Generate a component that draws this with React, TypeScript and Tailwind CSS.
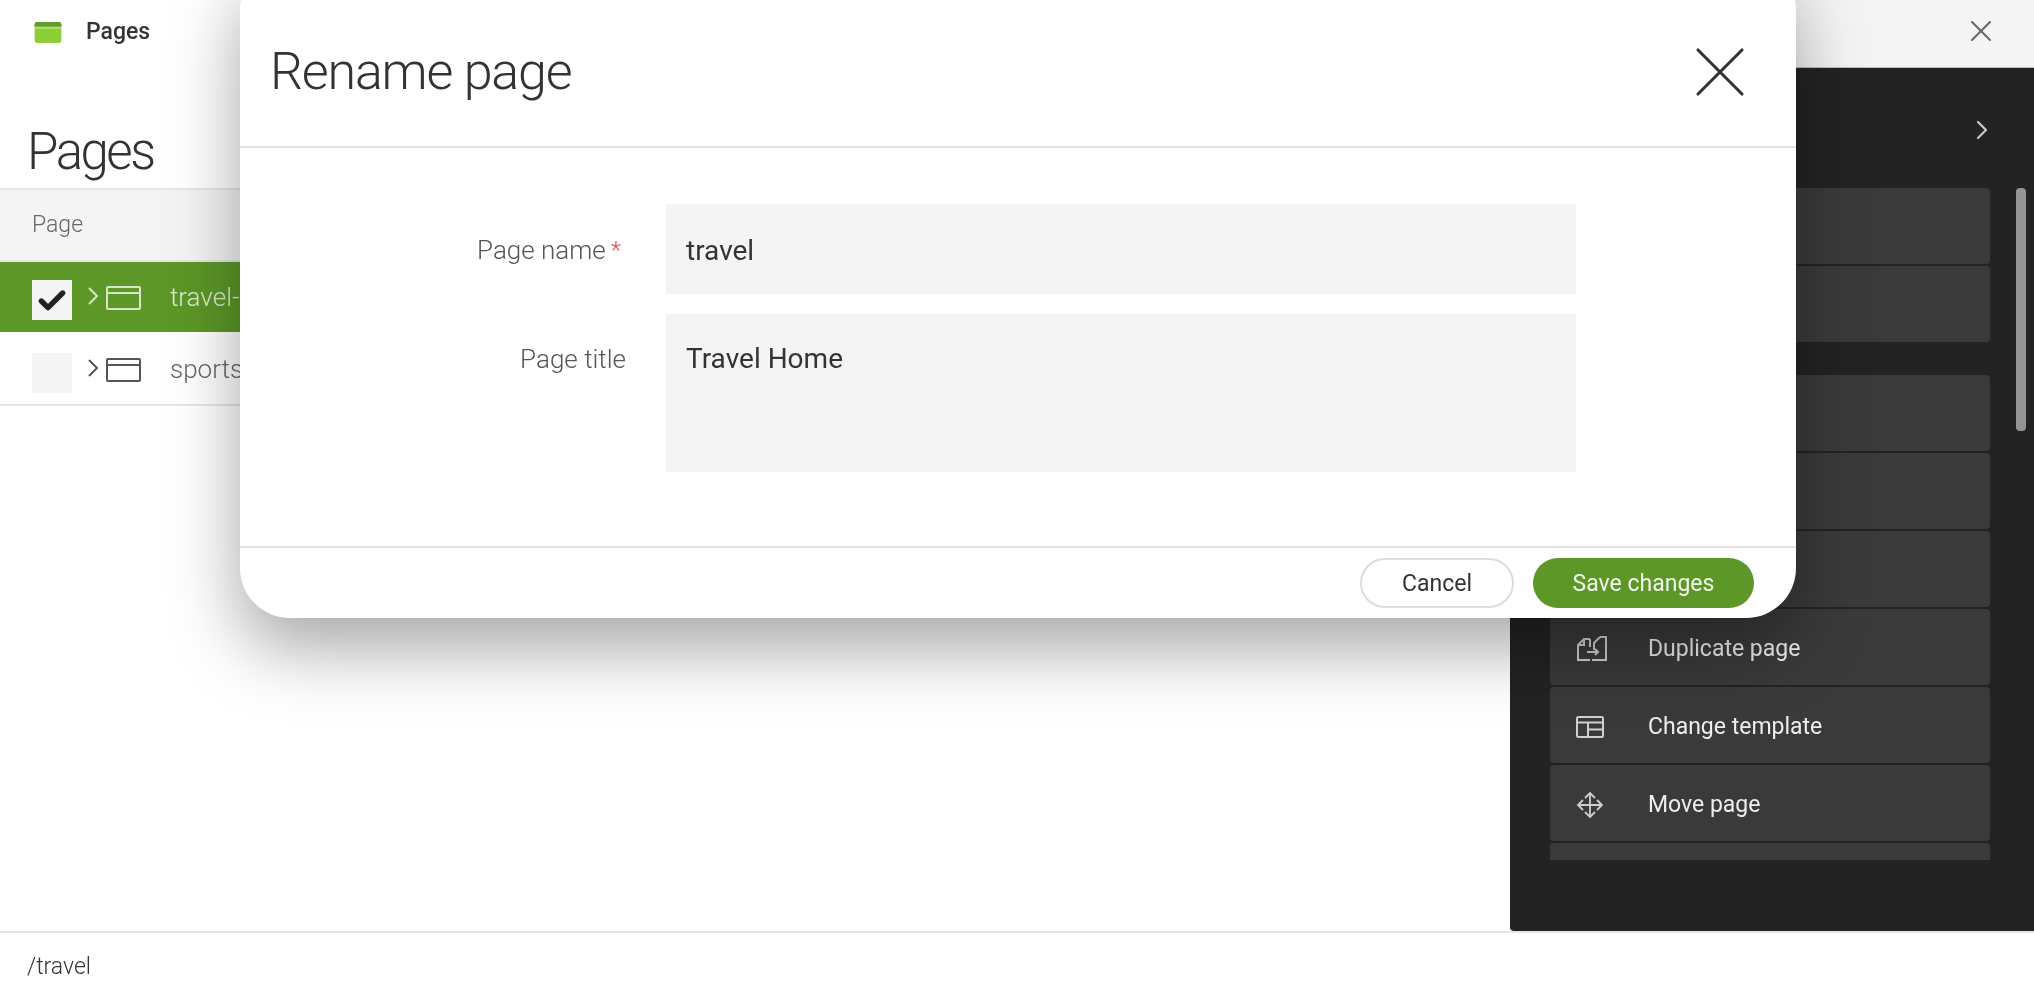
import React from "react";
import { X, ChevronRight, Check } from "lucide-react";

function PageIcon({ className }: { className: string }) {
  return (
    <svg viewBox="0 0 35 24" className={className} fill="none" stroke="currentColor" strokeWidth="2">
      <rect x="1" y="1" width="33" height="22" rx="1" />
      <path d="M1 7h33" />
    </svg>
  );
}

function RowChevron({ className }: { className: string }) {
  return (
    <svg viewBox="0 0 12 18" className={className} fill="none" stroke="currentColor" strokeWidth="2">
      <path d="M2 1l8 8-8 8" />
    </svg>
  );
}

function DuplicateIcon() {
  return (
    <svg viewBox="0 0 32 26" className="w-8 h-[26px]" fill="none" stroke="currentColor" strokeWidth="2">
      <path d="M14 3H8L2 9v15h12" />
      <path d="M8 3v6H2" />
      <path d="M14 3v8" />
      <path d="M24 1h6v23H16" />
      <path d="M24 1l-6 6v7" />
      <path d="M11 16h11M19 13l3 3-3 3" />
    </svg>
  );
}

function TemplateIcon() {
  return (
    <svg viewBox="0 0 28 22" className="w-7 h-[22px]" fill="none" stroke="currentColor" strokeWidth="2">
      <rect x="1" y="1" width="26" height="20" rx="1.5" />
      <path d="M1 6.5h26M12 6.5V21M12 13.5h15" />
    </svg>
  );
}

function MoveIcon() {
  return (
    <svg viewBox="0 0 28 28" className="w-7 h-7" fill="none" stroke="currentColor" strokeWidth="1.8">
      <path d="M14 2v24M2 14h24" />
      <path d="M9 7l5-5 5 5M9 21l5 5 5-5M7 9l-5 5 5 5M21 9l5 5-5 5" />
    </svg>
  );
}

function Action({ icon, label }: { icon?: React.ReactNode; label?: string }) {
  return (
    <div className="h-[76px] shrink-0 rounded bg-[#3a3a3a] pt-[4px] flex items-center text-[#eeeeee]">
      <div className="w-[98px] pl-[26px] flex items-center text-[#cfcfcf]">{icon}</div>
      <span className="text-[23px] font-normal">{label}</span>
    </div>
  );
}

export default function App() {
  return (
    <div className="relative w-full h-[996px] overflow-hidden bg-white flex flex-col font-['Roboto',sans-serif] blur-[0.7px]">
      {/* Top bar */}
      <header className="h-[68px] shrink-0 flex">
        <div className="flex-1 bg-white flex items-start pl-[34px] pt-[22px] gap-[24px]">
          <svg viewBox="0 0 28 22" className="w-7 h-[21px]">
            <rect width="28" height="22" rx="2.5" fill="#8ccf37" />
            <path d="M0 5V2.5A2.5 2.5 0 0 1 2.5 0h23A2.5 2.5 0 0 1 28 2.5V5z" fill="#5f9e2a" />
            <rect y="5" width="28" height="2" fill="#b4de7e" />
          </svg>
          <span className="text-[23px] font-medium text-[#333] leading-[18px] translate-y-[1px]">Pages</span>
        </div>
        <div className="w-[524px] shrink-0 bg-[#f4f4f4] border-b border-[#bbbbbb] flex justify-end">
          <X className="mr-[35px] mt-[13px] w-[36px] h-[36px] text-[#666]" strokeWidth={1.3} />
        </div>
      </header>

      {/* Body */}
      <div className="h-[863px] shrink-0 flex">
        <main className="flex-1 flex flex-col">
          <h1 className="h-[120px] pl-[27px] pt-[54px] text-[51px] leading-[60px] font-light text-[#333] tracking-[-2.5px]">Pages</h1>
          <div className="h-[74px] bg-[#f4f4f4] border-y-2 border-[#e6e6e6] pl-[32px] flex items-center text-[23px] font-light text-[#666]">
            Page
          </div>
          <div className="h-[70px] bg-[#5c9727] pl-[32px] pt-[6px] flex items-center text-[#d6e6c6]">
            <span className="w-10 h-[40px] bg-[#f4f4f4] flex items-center justify-center text-[#222]">
              <Check className="w-8 h-8 translate-y-[1px]" strokeWidth={4} />
            </span>
            <RowChevron className="ml-[15px] w-[12px] h-[18px] -translate-y-[4px]" />
            <PageIcon className="ml-[7px] w-[35px] h-[24px] -translate-y-[2px]" />
            <span className="ml-[29px] text-[26px] font-light -translate-y-[3px] text-[#dcebd0]">travel-home</span>
          </div>
          <div className="h-[74px] border-b-2 border-[#e6e6e6] pl-[32px] pt-[9px] flex items-center text-[#555]">
            <span className="w-10 h-[40px] bg-[#f4f4f4]" />
            <RowChevron className="ml-[15px] w-[12px] h-[18px] -translate-y-[5px]" />
            <PageIcon className="ml-[7px] w-[35px] h-[24px] -translate-y-[3px]" />
            <span className="ml-[29px] text-[26px] font-light -translate-y-[3px] text-[#666]">sports-home</span>
          </div>
        </main>

        <aside className="w-[524px] shrink-0 bg-[#232323] rounded-bl flex flex-col">
          <div className="h-[120px] shrink-0 flex items-start justify-end pr-[36px] pt-[46px]">
            <ChevronRight className="w-8 h-8 text-[#cccccc]" strokeWidth={1.6} />
          </div>
          <div className="flex h-[672px] pl-[40px] pr-[8px] gap-[26px]">
            <div className="flex-1 overflow-hidden flex flex-col gap-[2px]">
              <Action />
              <Action />
              <div className="h-[29px] shrink-0" />
              <Action />
              <Action />
              <Action />
              <Action icon={<DuplicateIcon />} label="Duplicate page" />
              <Action icon={<TemplateIcon />} label="Change template" />
              <Action icon={<MoveIcon />} label="Move page" />
              <Action />
            </div>
            <div className="w-[10px] h-[243px] rounded bg-[#959595]" />
          </div>
        </aside>
      </div>

      {/* Footer */}
      <footer className="flex-1 border-t-2 border-[#e6e6e6] pl-[27px] pt-[21px] text-[23px] font-light text-[#333] leading-[26px]">
        /travel
      </footer>

      {/* Modal */}
      <div className="absolute left-[240px] top-[-40px] w-[1556px] h-[658px] bg-white rounded-[50px] flex flex-col shadow-[0_30px_70px_rgba(0,0,0,0.35)]">
        <div className="h-[188px] shrink-0 border-b-2 border-[#e2e2e2] relative flex items-end pl-[30px] pb-[48px]">
          <h2 className="text-[52px] leading-[60px] font-light text-[#333] -mb-[4px] tracking-[-1.2px]">Rename page</h2>
          <X className="absolute right-[32px] top-[68px] w-[88px] h-[88px] text-[#333]" strokeWidth={0.85} />
        </div>
        <div className="flex-1 pt-[56px] flex flex-col gap-[20px]">
          <div className="flex">
            <label className="w-[381px] h-[90px] mr-[45px] pt-[30px] flex justify-end items-start text-[26px] leading-[32px] font-light text-[#555]">
              Page name<span className="text-[#e8474c] ml-[5px] text-[24px]">*</span>
            </label>
            <input
              readOnly
              value="travel"
              className="w-[910px] h-[90px] bg-[#f4f4f4] px-[20px] pt-[3px] text-[28px] text-[#333] outline-none"
            />
          </div>
          <div className="flex">
            <label className="w-[386px] mr-[40px] pt-[29px] text-right text-[26px] leading-[32px] font-light text-[#555]">
              Page title
            </label>
            <textarea
              readOnly
              value="Travel Home"
              className="block w-[910px] h-[158px] resize-none bg-[#f4f4f4] px-[20px] py-[29px] text-[28px] leading-[32px] text-[#333] outline-none"
            />
          </div>
        </div>
        <div className="h-[72px] shrink-0 border-t-2 border-[#e2e2e2] flex items-center justify-end gap-[19px] pr-[42px]">
          <button className="w-[154px] h-[50px] rounded-full border-2 border-[#dddddd] bg-white pt-[3px] text-[23px] text-[#333]">Cancel</button>
          <button className="w-[221px] h-[50px] rounded-full bg-[#5c9727] pt-[3px] text-[23px] text-[#f2f7ec]">Save changes</button>
        </div>
      </div>
    </div>
  );
}
